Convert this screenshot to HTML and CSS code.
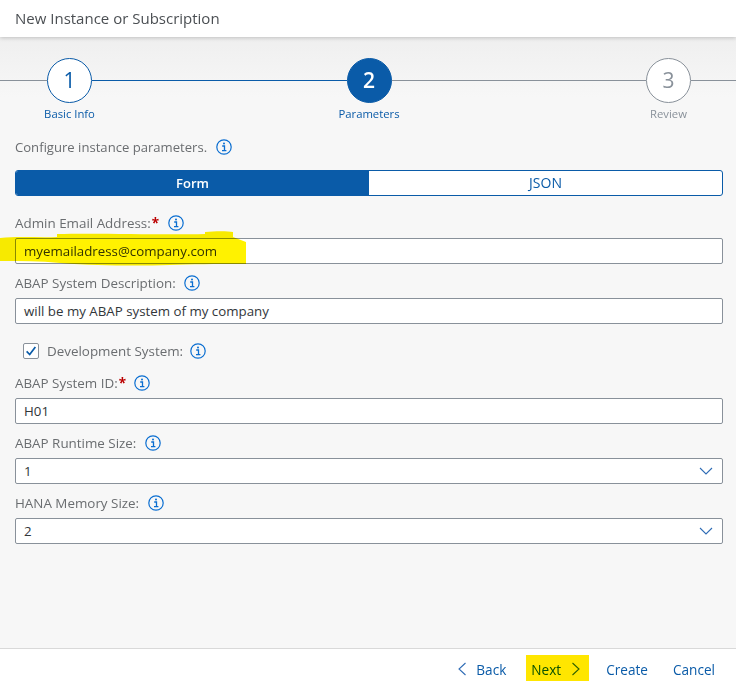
FILE: index.html
```html
<!DOCTYPE html>
<html lang="en">
<head>
    <meta charset="UTF-8">
    <title>New Instance or Subscription</title>
    <link rel="stylesheet" href="styles.css">
</head>
<body>
    <svg class="icon-defs" width="0" height="0">
        <symbol id="info" viewBox="0 0 16 16">
            <circle cx="8" cy="8" r="7.2" fill="none" stroke="#0a6ed1" stroke-width="1.2"/>
            <path d="M6.200 7h2.300v4.400M6 11.600h4.400" fill="none" stroke="#0a6ed1" stroke-width="1.300"/>
            <circle cx="8" cy="4.600" r="1" fill="#0a6ed1"/>
        </symbol>
        <symbol id="chevron" viewBox="0 0 14 8">
            <path d="M1 1l6 6 6-6" fill="none" stroke="#2f6cb5" stroke-width="1.100"/>
        </symbol>
    </svg>

    <header class="title-bar">New Instance or Subscription</header>

    <main class="content">
        <section class="wizard">
            <div class="link"></div>
            <div class="step done">
                <div class="bubble">1</div>
                <div class="step-name">Basic Info</div>
            </div>
            <div class="link active"></div>
            <div class="step current">
                <div class="bubble">2</div>
                <div class="step-name">Parameters</div>
            </div>
            <div class="link"></div>
            <div class="step">
                <div class="bubble">3</div>
                <div class="step-name">Review</div>
            </div>
            <div class="link end"></div>
        </section>

        <p class="intro">Configure instance parameters. <svg class="info"><use href="#info"/></svg></p>

        <div class="tabs">
            <div class="tab selected">Form</div>
            <div class="tab">JSON</div>
        </div>

        <form class="fields">
            <div class="field">
                <label class="label">Admin Email Address:<span class="req">*</span> <svg class="info"><use href="#info"/></svg></label>
                <div class="input">myemailadress@company.com</div>
                <svg class="marker" viewBox="0 0 247 36" width="247" height="36">
                    <path d="M0 7C20 5 40 7 57 6L57 3C100 2 160 4 205 3L205 1C215 0 228 0 233 1L233 6 246 11 246 33C215 33 190 33 170 34 140 35 100 35 60 32 40 30 20 30 0 30Z" fill="#fff200"/>
                </svg>
            </div>
            <div class="field">
                <label class="label">ABAP System Description: <svg class="info"><use href="#info"/></svg></label>
                <div class="input">will be my ABAP system of my company</div>
            </div>
            <div class="check-row">
                <span class="checkbox">
                    <svg viewBox="0 0 16 16" width="16" height="16"><path d="M3 8.500l3.500 3.500L13 3.500" fill="none" stroke="#0a5ba8" stroke-width="2"/></svg>
                </span>
                <span class="check-label">Development System:</span>
                <svg class="info"><use href="#info"/></svg>
            </div>
            <div class="field">
                <label class="label">ABAP System ID:<span class="req">*</span> <svg class="info"><use href="#info"/></svg></label>
                <div class="input">H01</div>
            </div>
            <div class="field">
                <label class="label">ABAP Runtime Size: <svg class="info"><use href="#info"/></svg></label>
                <div class="input select">1 <svg class="chevron"><use href="#chevron"/></svg></div>
            </div>
            <div class="field">
                <label class="label">HANA Memory Size: <svg class="info"><use href="#info"/></svg></label>
                <div class="input select">2 <svg class="chevron"><use href="#chevron"/></svg></div>
            </div>
        </form>
    </main>

    <footer class="footer">
        <button class="btn back" type="button">
            <svg class="arrow" viewBox="0 0 10 14"><path d="M8.500 1L2 7l6.500 6" fill="none" stroke="#2f6cb5" stroke-width="1.100"/></svg>
            Back
        </button>
        <button class="btn next" type="button">
            Next
            <svg class="arrow" viewBox="0 0 10 14"><path d="M1.500 1L8 7l-6.500 6" fill="none" stroke="#2f6cb5" stroke-width="1.100"/></svg>
            <span class="next-mark"></span>
        </button>
        <button class="btn" type="button">Create</button>
        <button class="btn" type="button">Cancel</button>
    </footer>
</body>
</html>
```

FILE: styles.css
```css
html, body {
    height: 100%;
}

body {
    margin: 0;
    display: flex;
    flex-direction: column;
    height: 683px;
    overflow: hidden;
    font-family: "Open Sans", sans-serif;
    font-size: 13.3px;
    color: #32363a;
    background-color: #f7f7f7;
}

.icon-defs {
    position: absolute;
}

.title-bar {
    height: 37px;
    line-height: 36px;
    padding-left: 15px;
    font-size: 15px;
    color: #4b4f53;
    background-color: #fff;
    box-shadow: 0 1px 4px rgba(0, 0, 0, 0.2);
    position: relative;
}

.content {
    flex: 1;
    padding: 0 13px 0 15px;
    background: linear-gradient(to bottom, #efefef, #f7f7f7 60px);
}

.wizard {
    display: flex;
    margin: 21px -13px 0 -15px;
    height: 78px;
}

.link {
    flex: 1;
    height: 1px;
    margin-top: 22px;
    background-color: #89919a;
}

.link:first-child {
    flex: 0 0 47px;
}

.link.active {
    background-color: #0a5ba8;
}

.link.end {
    flex: 0 0 45px;
}

.step {
    width: 45px;
    display: flex;
    flex-direction: column;
    align-items: center;
}

.bubble {
    flex: none;
    box-sizing: border-box;
    width: 45px;
    height: 45px;
    line-height: 43px;
    border: 1px solid #89919a;
    border-radius: 50%;
    text-align: center;
    font-size: 21px;
    color: #89919a;
    background-color: #fff;
}

.step-name {
    margin-top: 3px;
    font-size: 11.3px;
    white-space: nowrap;
    color: #89919a;
}

.done .bubble {
    border-color: #0a5ba8;
    color: #0a5ba8;
}

.current .bubble {
    border-color: #0a5ba8;
    color: #fff;
    font-weight: 600;
    background-color: #0a5ba8;
}

.done .step-name,
.current .step-name {
    color: #0a5ba8;
}

.intro {
    margin: 0;
    height: 22px;
    line-height: 22px;
    font-size: 13.1px;
    color: #6a6d70;
}

.info {
    width: 16px;
    height: 16px;
    margin-left: 5px;
    vertical-align: -3px;
}

.tabs {
    display: flex;
    height: 26px;
    margin-top: 12px;
    box-sizing: border-box;
    border: 1px solid #0a5ba8;
    border-radius: 3px;
    background-color: #fff;
    overflow: hidden;
}

.tab {
    flex: 1;
    line-height: 24px;
    text-align: center;
    font-size: 14px;
    color: #0a5ba8;
}

.tab.selected {
    flex: none;
    width: 353px;
    font-size: 13px;
    color: #fff;
    font-weight: 600;
    background-color: #0a5ba8;
}

.fields {
    margin-top: 16px;
}

.field {
    position: relative;
    margin-bottom: 8px;
}

.label {
    display: block;
    height: 26px;
    line-height: 22px;
    font-size: 13.4px;
    color: #6a6d70;
}

.req {
    color: #bb0000;
    font-weight: 700;
    margin-left: 1px;
}

.input {
    box-sizing: border-box;
    height: 26px;
    line-height: 24px;
    padding-left: 8px;
    border: 1px solid #89919a;
    border-radius: 2px;
    background-color: #fff;
    position: relative;
}

.select {
    display: flex;
    justify-content: space-between;
    align-items: center;
}

.chevron {
    width: 14px;
    height: 8px;
    margin-right: 9px;
}

.marker {
    position: absolute;
    left: -15px;
    top: 19px;
    mix-blend-mode: multiply;
}

.check-row {
    display: flex;
    align-items: center;
    height: 38px;
    padding-left: 8px;
    margin-bottom: 2px;
    font-size: 13.4px;
    color: #6a6d70;
}

.checkbox {
    box-sizing: border-box;
    width: 16px;
    height: 16px;
    border: 1px solid #89919a;
    border-radius: 2px;
    background-color: #fff;
    display: flex;
    align-items: center;
    justify-content: center;
}

.check-label {
    margin-left: 8px;
    margin-right: 2px;
}

.footer {
    flex: none;
    box-sizing: border-box;
    display: flex;
    justify-content: flex-end;
    align-items: center;
    height: 35px;
    padding: 6px 21px 0 0;
    border-top: 1px solid #d9d9d9;
    background-color: #fff;
}

.btn {
    position: relative;
    display: flex;
    align-items: center;
    margin-left: 25px;
    padding: 0;
    border: none;
    background: none;
    font-family: inherit;
    font-size: 13.6px;
    color: #0a5ba8;
}

.arrow {
    width: 10px;
    height: 14px;
}

.back .arrow {
    margin-right: 9px;
}

.next .arrow {
    margin-left: 10px;
}

.next-mark {
    position: absolute;
    left: -5px;
    right: -8px;
    top: -5px;
    bottom: -2px;
    background-color: #ffe600;
    mix-blend-mode: multiply;
}
```
